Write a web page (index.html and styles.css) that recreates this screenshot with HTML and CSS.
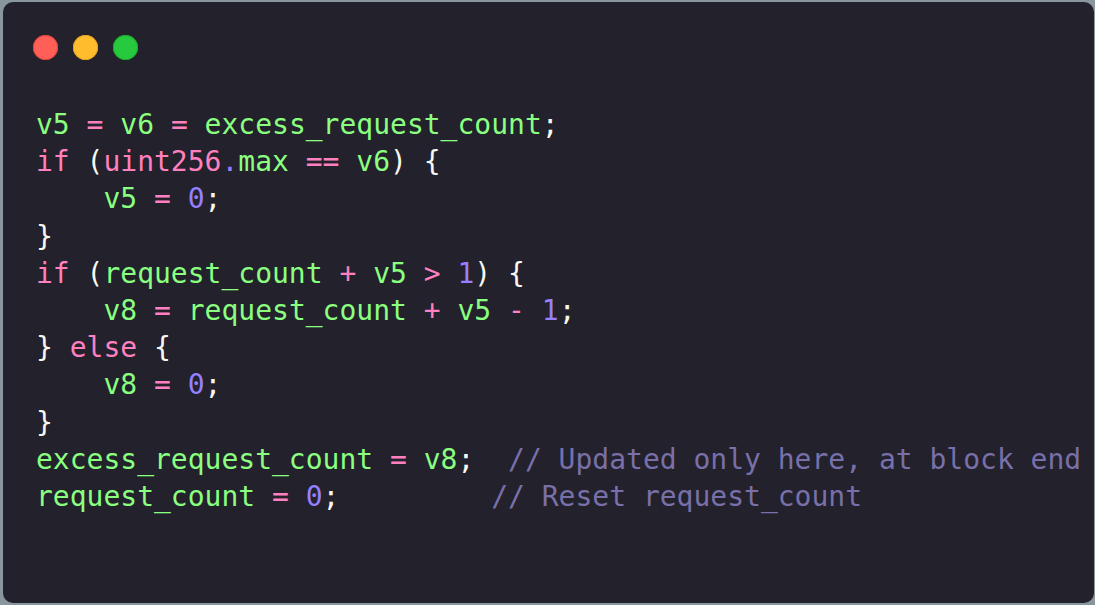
FILE: index.html
```html
<!DOCTYPE html>
<html>
<head>
<meta charset="utf-8">
<link rel="stylesheet" href="styles.css">
</head>
<body>
<div class="window">
  <div class="controls">
    <span class="dot red"></span>
    <span class="dot yellow"></span>
    <span class="dot green"></span>
  </div>
<pre class="code"><span class="v">v5</span> <span class="o">=</span> <span class="v">v6</span> <span class="o">=</span> <span class="v">excess_request_count</span><span class="p">;</span>
<span class="k">if</span> <span class="p">(</span><span class="k">uint256</span><span class="n">.</span><span class="v">max</span> <span class="o">==</span> <span class="v">v6</span><span class="p">)</span> <span class="p">{</span>
    <span class="v">v5</span> <span class="o">=</span> <span class="n">0</span><span class="p">;</span>
<span class="p">}</span>
<span class="k">if</span> <span class="p">(</span><span class="v">request_count</span> <span class="o">+</span> <span class="v">v5</span> <span class="o">&gt;</span> <span class="n">1</span><span class="p">)</span> <span class="p">{</span>
    <span class="v">v8</span> <span class="o">=</span> <span class="v">request_count</span> <span class="o">+</span> <span class="v">v5</span> <span class="o">-</span> <span class="n">1</span><span class="p">;</span>
<span class="p">}</span> <span class="k">else</span> <span class="p">{</span>
    <span class="v">v8</span> <span class="o">=</span> <span class="n">0</span><span class="p">;</span>
<span class="p">}</span>
<span class="v">excess_request_count</span> <span class="o">=</span> <span class="v">v8</span><span class="p">;</span>  <span class="c">// Updated only here, at block end</span>
<span class="v">request_count</span> <span class="o">=</span> <span class="n">0</span><span class="p">;</span>         <span class="c">// Reset request_count</span></pre>
</div>
</body>
</html>
```

FILE: styles.css
```css
html, body {
  margin: 0;
  padding: 0;
  background: #8a969e;
  height: 100%;
  overflow: hidden;
}
body {
  padding: 2px 1px 2px 3px;
  box-sizing: border-box;
}
.window {
  height: 601px;
  background: #22212c;
  border-radius: 10px;
  padding: 33px 0 0 30px;
  box-sizing: border-box;
}
.controls {
  display: flex;
  gap: 15px;
  height: 25px;
}
.dot {
  width: 25px;
  height: 25px;
  border-radius: 50%;
  display: block;
}
.red { background: #ff5f56; box-shadow: inset 0 0 0 1px #e0443e; }
.yellow { background: #ffbd2e; box-shadow: inset 0 0 0 1px #dea123; }
.green { background: #27c93f; box-shadow: inset 0 0 0 1px #1aab29; }
.code {
  margin: 46px 0 0 3px;
  font-family: "DejaVu Sans Mono", monospace;
  font-size: 28px;
  line-height: 37.2px;
  color: #f8f8f2;
  white-space: pre;
}
.v { color: #8aff80; }
.o { color: #ff80bf; }
.k { color: #ff80bf; }
.n { color: #9580ff; }
.p { color: #f8f8f2; }
.c { color: #7970a9; }
```
